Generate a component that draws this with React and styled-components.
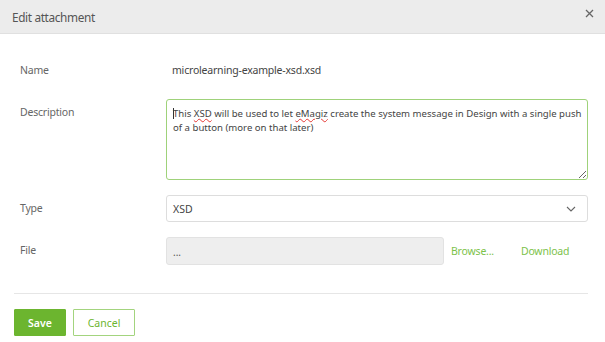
import React from 'react';
import styled, { createGlobalStyle } from 'styled-components';

const GlobalStyle = createGlobalStyle`
  html, body {
    margin: 0;
    padding: 0;
    background: #fff;
    font-family: "Noto Sans", "Open Sans", sans-serif;
    color: #555;
  }
`;

const Dialog = styled.div`
  width: 605px;
  height: 342px;
  background: #fff;
  overflow: hidden;
`;

const Header = styled.div`
  height: 34px;
  box-sizing: border-box;
  background: #ececec;
  border-bottom: 1px solid #e0e0e0;
  display: flex;
  align-items: center;
  justify-content: space-between;
  padding: 0 10px 0 12px;
`;

const Title = styled.div`
  font-size: 11.8px;
  color: #555;
  letter-spacing: -0.35px;
`;

const Close = styled.button`
  border: 0;
  background: none;
  padding: 0;
  width: 12px;
  height: 12px;
  display: flex;
  align-items: center;
  justify-content: center;
  margin-top: -6px;
  cursor: pointer;
`;

const Body = styled.div`
  padding: 0 17px 0 14px;
`;

const Form = styled.div`
  display: grid;
  grid-template-columns: 146px 1fr;
  row-gap: 15px;
  padding: 24px 0 28px 6px;
  align-items: start;
`;

const Label = styled.div`
  font-size: 10.5px;
  color: #666;
  line-height: ${p => p.$lh || 27}px;
  letter-spacing: -0.2px;
  margin-top: ${p => p.$top || 0}px;
`;

const Value = styled.div`
  font-size: 10.5px;
  color: #444;
  line-height: 27px;
  padding-left: 6px;
  letter-spacing: -0.2px;
  margin-top: ${p => p.$top || 0}px;
`;

const TextArea = styled.div`
  box-sizing: border-box;
  width: 100%;
  height: 81px;
  border: 1px solid #9fd27a;
  border-radius: 3px;
  padding: 7px 5px 7px 6px;
  font-size: 9.6px;
  line-height: 13.5px;
  color: #444;
  resize: vertical;
  overflow: auto;
  outline: none;
`;

const Caret = styled.span`
  display: inline-block;
  width: 1px;
  height: 11px;
  background: #333;
  vertical-align: -2px;
  margin-right: -1px;
`;

const SelectBox = styled.div`
  box-sizing: border-box;
  height: 27px;
  border: 1px solid #ddd;
  border-radius: 3px;
  display: flex;
  align-items: center;
  justify-content: space-between;
  padding: 0 11px 0 6px;
  font-size: 10.5px;
  color: #444;
`;

const FileRow = styled.div`
  display: flex;
  align-items: center;
  gap: 7px;
`;

const FileInput = styled.div`
  box-sizing: border-box;
  width: 278px;
  height: 28px;
  background: #eeeeee;
  border: 1px solid #e2e2e2;
  border-radius: 3px;
  display: flex;
  align-items: center;
  padding: 2px 6px 0;
  font-size: 10px;
  color: #555;
`;

const Link = styled.a`
  font-size: 10.5px;
  color: #7dc24b;
  text-decoration: none;
  letter-spacing: -0.2px;
  margin-right: ${p => p.$gap || 0}px;
`;

const Divider = styled.hr`
  margin: 0;
  border: 0;
  border-top: 1px solid #e6e6e6;
`;

const Footer = styled.div`
  display: flex;
  gap: 7px;
  padding-top: 15px;
`;

const Button = styled.button`
  box-sizing: border-box;
  height: 27px;
  padding: 0;
  width: ${p => p.$w}px;
  font-family: inherit;
  font-size: 10.5px;
  font-weight: ${p => (p.$primary ? 600 : 400)};
  border-radius: 1px;
  border: 1px solid ${p => (p.$primary ? '#6cb52f' : '#a3d47e')};
  background: ${p => (p.$primary ? '#6cb52f' : '#fff')};
  color: ${p => (p.$primary ? '#fff' : '#6cb52f')};
  cursor: pointer;
`;

const Squiggle = styled.span`
  text-decoration: underline wavy #e53935;
  text-decoration-thickness: 1px;
  text-underline-offset: 1px;
`;

export default function App() {
  return (
    <Dialog>
      <GlobalStyle />
      <Header>
        <Title>Edit attachment</Title>
        <Close aria-label="Close">
          <svg width="9" height="9" viewBox="0 0 9 9">
            <path d="M1 1L8 8M8 1L1 8" stroke="#666" strokeWidth="1.3" fill="none" />
          </svg>
        </Close>
      </Header>
      <Body>
        <Form>
          <Label $top={-1}>Name</Label>
          <Value $top={-1}>microlearning-example-xsd.xsd</Value>

          <Label $top={2} $lh={22}>Description</Label>
          <TextArea role="textbox" aria-multiline="true">
            <Caret />This <Squiggle>XSD</Squiggle> will be used to let <Squiggle>eMagiz</Squiggle> create
            the system message in Design with a single push
            <br />
            of a button (more on that later)
          </TextArea>

          <Label>Type</Label>
          <SelectBox>
            <span>XSD</span>
            <svg width="10" height="6" viewBox="0 0 10 6">
              <path d="M1 1L5 5L9 1" stroke="#666" strokeWidth="1.1" fill="none" />
            </svg>
          </SelectBox>

          <Label>File</Label>
          <FileRow>
            <FileInput>...</FileInput>
            <Link href="#" $gap={20}>Browse...</Link>
            <Link href="#">Download</Link>
          </FileRow>
        </Form>
        <Divider />
        <Footer>
          <Button $primary $w={52}>Save</Button>
          <Button $w={62}>Cancel</Button>
        </Footer>
      </Body>
    </Dialog>
  );
}
